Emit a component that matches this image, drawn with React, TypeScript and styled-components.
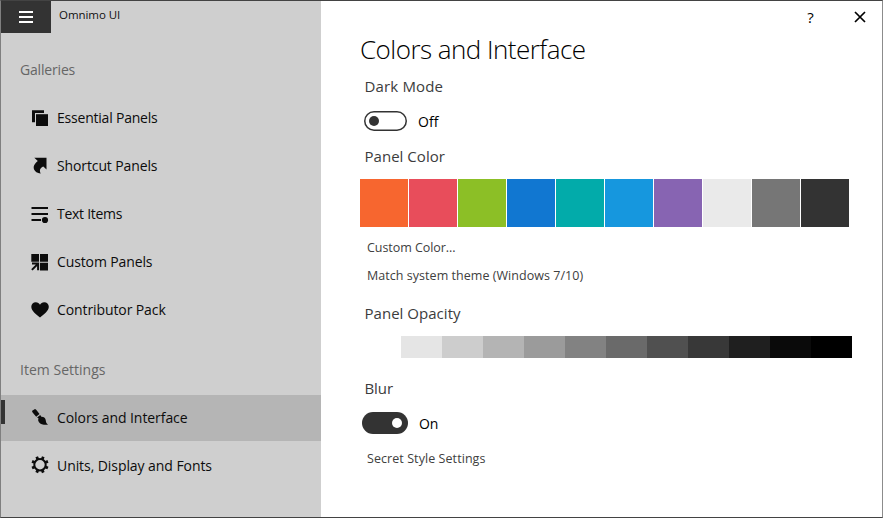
import React from 'react';
import styled, { createGlobalStyle } from 'styled-components';

const GlobalStyle = createGlobalStyle`
  * { box-sizing: border-box; }
  body { margin: 0; background: #fff; font-family: "Open Sans", "Noto Sans", sans-serif; }
  button { border: 0; padding: 0; background: none; font: inherit; color: inherit; }
`;

const Window = styled.div`
  display: flex;
  width: 883px;
  height: 518px;
  border: 1px solid;
  border-color: #434343 #8c8c8c #434343 #7f7f7f;
  background: #fff;
  overflow: hidden;
`;

const Sidebar = styled.nav`
  width: 320px;
  flex: none;
  background: #cfcfcf;
  color: #0c0c0c;
`;

const TitleBar = styled.div`
  display: flex;
  height: 32px;
`;

const MenuButton = styled.button`
  display: flex;
  flex-direction: column;
  align-items: center;
  justify-content: center;
  gap: 3px;
  width: 50px;
  height: 32px;
  background: #333;
`;

const MenuBar = styled.span`
  width: 14px;
  height: 2px;
  background: #fff;
`;

const AppName = styled.span`
  padding-left: 8px;
  font-size: 11.5px;
  line-height: 28px;
  letter-spacing: -0.05px;
  color: #111;
`;

const GroupTitle = styled.h2<{ $top: number; $tracking: number }>`
  margin: ${p => p.$top}px 0 13px;
  padding-left: 19px;
  font-size: 14px;
  font-weight: 400;
  line-height: 24px;
  letter-spacing: ${p => p.$tracking}px;
  color: #666;
`;

const NavList = styled.div`
  display: flex;
  flex-direction: column;
  gap: 2px;
`;

const NavItem = styled.button<{ $active?: boolean }>`
  display: flex;
  align-items: center;
  width: 100%;
  height: 46px;
  background: ${p => (p.$active ? '#b5b5b5' : 'transparent')};
`;

const Marker = styled.span<{ $active?: boolean }>`
  width: 4px;
  height: 24px;
  margin: 0 26px 12px 0;
  background: ${p => (p.$active ? '#333' : 'transparent')};
`;

const NavIcon = styled.svg`
  width: 18px;
  height: 18px;
  fill: #0c0c0c;
  overflow: visible;
`;

const NavLabel = styled.span<{ $tracking: number }>`
  padding-left: 8px;
  font-size: 14px;
  line-height: 24px;
  letter-spacing: ${p => p.$tracking}px;
`;

const Main = styled.main`
  flex: 1;
  min-width: 0;
  color: #333;
`;

const Controls = styled.div`
  display: flex;
  justify-content: flex-end;
  height: 32px;
`;

const ControlButton = styled.button`
  display: flex;
  align-items: center;
  justify-content: center;
  height: 32px;
  color: #000;
`;

const HelpButton = styled(ControlButton)`
  width: 50px;
  padding-right: 1px;
  font-size: 15px;
  font-weight: 500;
`;

const CloseButton = styled(ControlButton)`
  width: 46px;
  padding-left: 1px;
`;

const Content = styled.section`
  padding-left: 39px;
`;

const PageTitle = styled.h1`
  margin: 0;
  font-size: 26px;
  font-weight: 300;
  line-height: 32px;
  letter-spacing: -0.53px;
  color: #000;
`;

const SectionLabel = styled.h3<{ $top: number; $tracking?: number }>`
  margin: ${p => p.$top}px 0 0 4.5px;
  font-size: 15px;
  font-weight: 400;
  line-height: 20px;
  letter-spacing: ${p => p.$tracking ?? 0.03}px;
  color: #3c3c3c;
`;

const ToggleRow = styled.div<{ $top: number; $inset: number }>`
  display: flex;
  align-items: center;
  height: 22px;
  margin: ${p => p.$top}px 0 0 ${p => p.$inset}px;
`;

const Track = styled.button<{ $on: boolean }>`
  display: flex;
  align-items: center;
  justify-content: ${p => (p.$on ? 'flex-end' : 'flex-start')};
  width: ${p => (p.$on ? 46 : 43)}px;
  height: ${p => (p.$on ? 22 : 20)}px;
  padding: 0 ${p => (p.$on ? 6 : 4)}px;
  border-radius: 11px;
  background: ${p => (p.$on ? '#333' : '#fff')};
  box-shadow: ${p => (p.$on ? 'none' : 'inset 0 0 0 1.5px #333')};
`;

const Thumb = styled.span<{ $on: boolean }>`
  width: 10px;
  height: 10px;
  margin-left: 1px;
  border-radius: 50%;
  background: ${p => (p.$on ? '#fff' : '#333')};
`;

const ToggleText = styled.span<{ $tracking: number }>`
  margin-left: 11px;
  padding-top: 1px;
  font-size: 14px;
  font-weight: 500;
  line-height: 20px;
  letter-spacing: ${p => p.$tracking}px;
  color: #000;
`;

const Swatches = styled.div`
  display: flex;
  gap: 1px;
  margin-top: 13px;
`;

const Swatch = styled.button<{ $color: string }>`
  width: 48px;
  height: 48px;
  background: ${p => p.$color};
`;

const OpacityScale = styled.div`
  display: flex;
  margin-top: 13px;
`;

const OpacityStep = styled.button<{ $color: string }>`
  width: 41px;
  height: 22px;
  background: ${p => p.$color};
`;

const TextLink = styled.a<{ $top: number; $tracking: number }>`
  display: block;
  margin: ${p => p.$top}px 0 0 7px;
  font-size: 12.5px;
  line-height: 20px;
  letter-spacing: ${p => p.$tracking}px;
  color: #404040;
`;

const teeth = Array.from({ length: 8 }, (_, i) => 22.5 + i * 45);

const icons = {
  panels: (
    <>
      <path d="M1 1.2H13V4H4V13.3H1Z" />
      <path d="M5 5.2H17V17H5Z" />
    </>
  ),
  shortcut: (
    <path d="M3.3.8H15.5V12.6L12.3 9.5C9.2 10.8 8 13.4 9.8 16.6 5.2 16.1 2.3 13.1 2.7 9.7 3 7.5 4.8 5.6 6.8 3.9Z" />
  ),
  text: (
    <>
      <path d="M.5 2H17V4H.5ZM.5 8H17V10H.5ZM.5 14H10V16H.5Z" />
      <circle cx="14" cy="15" r="3.1" />
    </>
  ),
  custom: (
    <>
      <path d="M.3 1H8V8.7H.3ZM9 1H17V8.7H9ZM9 9.8H17V17.4H9Z" />
      <path d="M1 10.6H7.1V17.2M7 10.8.9 16.9" fill="none" stroke="#0c0c0c" strokeWidth="2" />
    </>
  ),
  heart: (
    <path d="M9 16.6C5 13.2.3 9.8.3 5.8.3 3 2.3 1.2 4.8 1.2 6.7 1.2 8.2 2.2 9 3.7 9.8 2.2 11.3 1.2 13.2 1.2 15.8 1.2 17.8 3 17.8 5.8 17.8 9.8 13 13.2 9 16.6Z" />
  ),
  brush: (
    <>
      <path d="M1.2 1.8 4 0Q5 .2 5.6 1.2L8.5 5.1 5.2 7.8 1.6 3.5Q.8 2.6 1.2 1.8Z" />
      <path d="M9.2 6 10.4 7.8C13.2 7.8 14.6 9.5 14.8 11.4 14.9 13.4 15.6 14.4 17 15.7 12.6 16 9.6 15.3 8 13.2 6.9 11.8 7 10.8 7.6 9.6L6.1 8.4Z" />
    </>
  ),
  gear: (
    <>
      <circle cx="9" cy="7.7" r="5.7" fill="none" stroke="#0c0c0c" strokeWidth="2" />
      {teeth.map(a => (
        <rect key={a} x="7.6" y="-.9" width="2.8" height="3" transform={`rotate(${a} 9 7.7)`} />
      ))}
    </>
  ),
};

type Entry = { label: string; icon: keyof typeof icons; tracking: number; active?: boolean };

const galleries: Entry[] = [
  { label: 'Essential Panels', icon: 'panels', tracking: -0.21 },
  { label: 'Shortcut Panels', icon: 'shortcut', tracking: -0.12 },
  { label: 'Text Items', icon: 'text', tracking: -0.28 },
  { label: 'Custom Panels', icon: 'custom', tracking: -0.12 },
  { label: 'Contributor Pack', icon: 'heart', tracking: -0.1 },
];

const settings: Entry[] = [
  { label: 'Colors and Interface', icon: 'brush', tracking: -0.07, active: true },
  { label: 'Units, Display and Fonts', icon: 'gear', tracking: -0.07 },
];

const panelColors = [
  '#f7662f', '#e84d5b', '#8cbf26', '#1177d1', '#02abaa',
  '#1697de', '#8764b2', '#eaeaea', '#767676', '#333333',
];

const opacityColors = [
  '#ffffff', '#e5e5e5', '#cdcdcd', '#b4b4b4', '#9b9b9b', '#828282',
  '#6a6a6a', '#505050', '#383838', '#1f1f1f', '#0a0a0a', '#000000',
];

function Nav({ entries }: { entries: Entry[] }) {
  return (
    <NavList>
      {entries.map(e => (
        <NavItem key={e.label} $active={e.active}>
          <Marker $active={e.active} />
          <NavIcon viewBox="0 0 18 18">{icons[e.icon]}</NavIcon>
          <NavLabel $tracking={e.tracking}>{e.label}</NavLabel>
        </NavItem>
      ))}
    </NavList>
  );
}

export default function App() {
  return (
    <>
      <GlobalStyle />
      <Window>
        <Sidebar>
          <TitleBar>
            <MenuButton aria-label="Menu">
              <MenuBar />
              <MenuBar />
              <MenuBar />
            </MenuButton>
            <AppName>Omnimo UI</AppName>
          </TitleBar>
          <GroupTitle $top={25} $tracking={-0.18}>Galleries</GroupTitle>
          <Nav entries={galleries} />
          <GroupTitle $top={25} $tracking={0.02}>Item Settings</GroupTitle>
          <Nav entries={settings} />
        </Sidebar>
        <Main>
          <Controls>
            <HelpButton aria-label="Help">?</HelpButton>
            <CloseButton aria-label="Close">
              <svg width="12" height="12" viewBox="0 0 12 12" stroke="#000" strokeWidth="1.7">
                <path d="M1 1 11 11M11 1 1 11" />
              </svg>
            </CloseButton>
          </Controls>
          <Content>
            <PageTitle>Colors and Interface</PageTitle>
            <SectionLabel $top={11} $tracking={0.15}>Dark Mode</SectionLabel>
            <ToggleRow $top={14} $inset={4}>
              <Track $on={false} aria-label="Dark Mode"><Thumb $on={false} /></Track>
              <ToggleText $tracking={0.1}>Off</ToggleText>
            </ToggleRow>
            <SectionLabel $top={14}>Panel Color</SectionLabel>
            <Swatches>
              {panelColors.map(c => <Swatch key={c} $color={c} aria-label={c} />)}
            </Swatches>
            <TextLink $top={11} $tracking={-0.05}>Custom Color...</TextLink>
            <TextLink $top={8} $tracking={0.04}>Match system theme (Windows 7/10)</TextLink>
            <SectionLabel $top={17}>Panel Opacity</SectionLabel>
            <OpacityScale>
              {opacityColors.map(c => <OpacityStep key={c} $color={c} aria-label={c} />)}
            </OpacityScale>
            <SectionLabel $top={20} $tracking={-0.1}>Blur</SectionLabel>
            <ToggleRow $top={14} $inset={2}>
              <Track $on aria-label="Blur"><Thumb $on /></Track>
              <ToggleText $tracking={-0.2}>On</ToggleText>
            </ToggleRow>
            <TextLink $top={15} $tracking={0.07}>Secret Style Settings</TextLink>
          </Content>
        </Main>
      </Window>
    </>
  );
}
